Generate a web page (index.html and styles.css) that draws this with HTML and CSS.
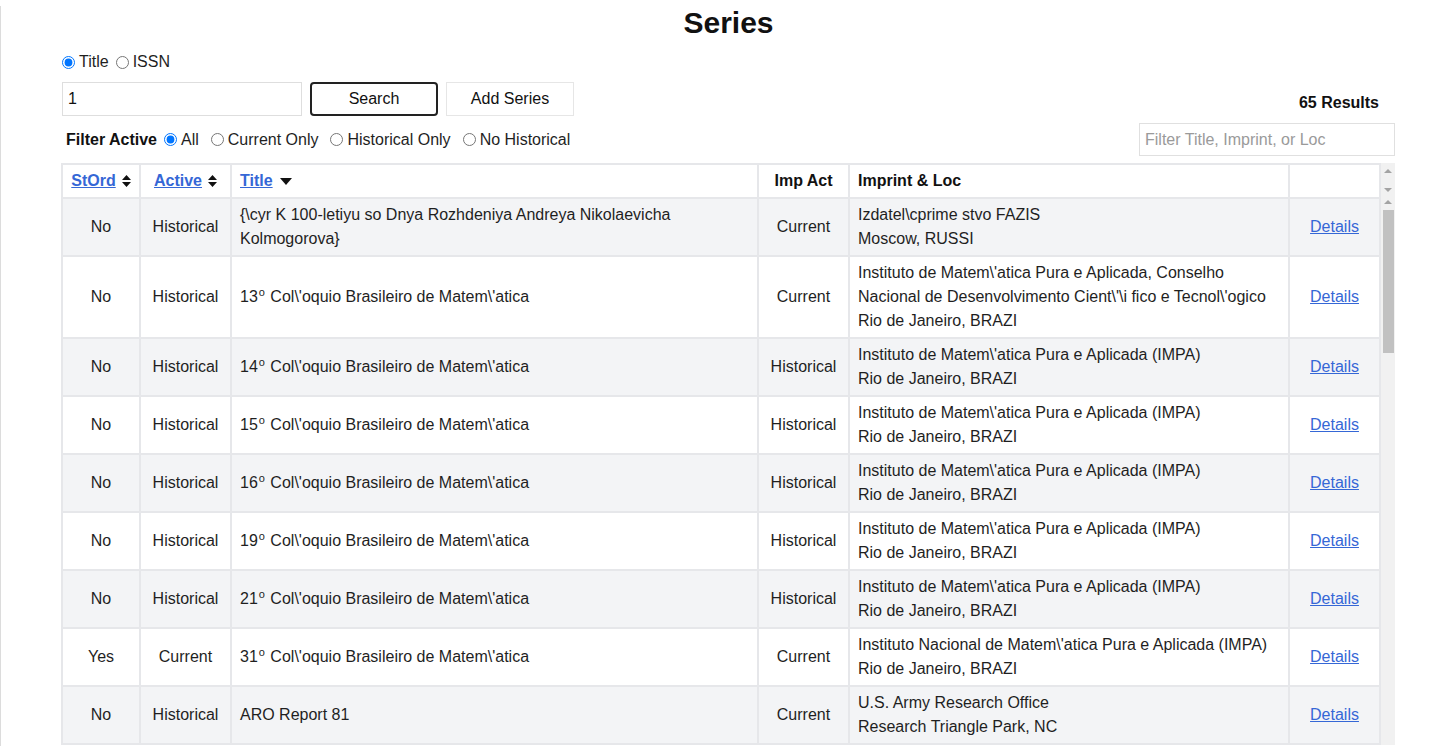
FILE: index.html
```html
<!DOCTYPE html>
<html lang="en">
<head>
<meta charset="utf-8">
<title>Series</title>
<link rel="stylesheet" href="styles.css">
</head>
<body>
<div class="frame">
  <div class="page">
    <h1 class="title">Series</h1>
    <div class="mode-row">
      <label class="opt first"><input type="radio" name="mode" checked>Title</label>
      <label class="opt"><input type="radio" name="mode">ISSN</label>
    </div>
    <div class="search-row">
      <input class="search-input" type="text" value="1">
      <button class="btn btn-search">Search</button>
      <button class="btn btn-add">Add Series</button>
      <div class="results">65 Results</div>
    </div>
    <div class="filter-row">
      <span class="filter-label">Filter Active</span>
      <label class="fopt"><input type="radio" name="fa" checked>All</label>
      <label class="fopt"><input type="radio" name="fa">Current Only</label>
      <label class="fopt"><input type="radio" name="fa">Historical Only</label>
      <label class="fopt"><input type="radio" name="fa">No Historical</label>
      <input class="filter-input" type="text" placeholder="Filter Title, Imprint, or Loc">
    </div>
    <div class="table-wrap">
      <table class="grid">
        <colgroup>
          <col class="c-stord"><col class="c-active"><col class="c-title"><col class="c-imp"><col class="c-loc"><col class="c-det">
        </colgroup>
        <thead>
          <tr>
            <th class="center"><a href="#" class="sort">StOrd</a><svg class="ico-sort" viewBox="0 0 9 12" width="9" height="12"><path d="M4.5 0 L9 5 H0 Z M0 7 H9 L4.5 12 Z" fill="#111"/></svg></th>
            <th class="center"><a href="#" class="sort">Active</a><svg class="ico-sort" viewBox="0 0 9 12" width="9" height="12"><path d="M4.5 0 L9 5 H0 Z M0 7 H9 L4.5 12 Z" fill="#111"/></svg></th>
            <th class="left"><a href="#" class="sort">Title</a><svg class="ico-down" viewBox="0 0 12 7" width="12" height="7"><path d="M0 0 H12 L6 7 Z" fill="#111"/></svg></th>
            <th class="center">Imp Act</th>
            <th class="left">Imprint &amp; Loc</th>
            <th></th>
          </tr>
        </thead>
        <tbody>
          <tr><td class="center">No</td><td class="center">Historical</td><td>{\cyr K 100-letiyu so Dnya Rozhdeniya Andreya Nikolaevicha Kolmogorova}</td><td class="center">Current</td><td>Izdatel\cprime stvo FAZIS<br>Moscow, RUSSI</td><td class="center"><a href="#">Details</a></td></tr>
          <tr><td class="center">No</td><td class="center">Historical</td><td>13<sup>o</sup> Col\'oquio Brasileiro de Matem\'atica</td><td class="center">Current</td><td>Instituto de Matem\'atica Pura e Aplicada, Conselho Nacional de Desenvolvimento Cient\'\i fico e Tecnol\'ogico<br>Rio de Janeiro, BRAZI</td><td class="center"><a href="#">Details</a></td></tr>
          <tr><td class="center">No</td><td class="center">Historical</td><td>14<sup>o</sup> Col\'oquio Brasileiro de Matem\'atica</td><td class="center">Historical</td><td>Instituto de Matem\'atica Pura e Aplicada (IMPA)<br>Rio de Janeiro, BRAZI</td><td class="center"><a href="#">Details</a></td></tr>
          <tr><td class="center">No</td><td class="center">Historical</td><td>15<sup>o</sup> Col\'oquio Brasileiro de Matem\'atica</td><td class="center">Historical</td><td>Instituto de Matem\'atica Pura e Aplicada (IMPA)<br>Rio de Janeiro, BRAZI</td><td class="center"><a href="#">Details</a></td></tr>
          <tr><td class="center">No</td><td class="center">Historical</td><td>16<sup>o</sup> Col\'oquio Brasileiro de Matem\'atica</td><td class="center">Historical</td><td>Instituto de Matem\'atica Pura e Aplicada (IMPA)<br>Rio de Janeiro, BRAZI</td><td class="center"><a href="#">Details</a></td></tr>
          <tr><td class="center">No</td><td class="center">Historical</td><td>19<sup>o</sup> Col\'oquio Brasileiro de Matem\'atica</td><td class="center">Historical</td><td>Instituto de Matem\'atica Pura e Aplicada (IMPA)<br>Rio de Janeiro, BRAZI</td><td class="center"><a href="#">Details</a></td></tr>
          <tr><td class="center">No</td><td class="center">Historical</td><td>21<sup>o</sup> Col\'oquio Brasileiro de Matem\'atica</td><td class="center">Historical</td><td>Instituto de Matem\'atica Pura e Aplicada (IMPA)<br>Rio de Janeiro, BRAZI</td><td class="center"><a href="#">Details</a></td></tr>
          <tr><td class="center">Yes</td><td class="center">Current</td><td>31<sup>o</sup> Col\'oquio Brasileiro de Matem\'atica</td><td class="center">Current</td><td>Instituto Nacional de Matem\'atica Pura e Aplicada (IMPA)<br>Rio de Janeiro, BRAZI</td><td class="center"><a href="#">Details</a></td></tr>
          <tr><td class="center">No</td><td class="center">Historical</td><td>ARO Report 81</td><td class="center">Current</td><td>U.S. Army Research Office<br>Research Triangle Park, NC</td><td class="center"><a href="#">Details</a></td></tr>
        </tbody>
      </table>
      <div class="sbar">
        <div class="sbar-head">
          <span class="arr arr-up"></span>
          <span class="arr arr-down"></span>
        </div>
        <div class="sbar-body">
          <span class="arr arr-up"></span>
          <div class="thumb"></div>
        </div>
      </div>
    </div>
  </div>
</div>
</body>
</html>
```
FILE: styles.css
```css
html, body {
  margin: 0;
  padding: 0;
  overflow: hidden;
  background: #fff;
}
body {
  font-family: "Liberation Sans", Arial, sans-serif;
  font-size: 16px;
  color: #1f1f1f;
}
.frame {
  border-left: 1px solid #dcdcdc;
  min-height: 100vh;
}
.page {
  margin-left: 61px;
  width: 1333px;
}
.title {
  margin: 6px 0 0;
  font-size: 30px;
  line-height: 34px;
  font-weight: bold;
  text-align: center;
  color: #111;
}
.mode-row {
  margin-top: 12px;
  height: 20px;
  display: flex;
  align-items: center;
}
.opt {
  display: flex;
  align-items: center;
  margin-left: 7px;
}
.opt.first { margin-left: 0; }
.opt input, .fopt input {
  width: 13px;
  height: 13px;
  margin: 0 4px 0 0;
}
.search-row {
  margin-top: 10px;
  display: flex;
  align-items: center;
  height: 34px;
}
.search-input {
  box-sizing: border-box;
  width: 240px;
  height: 34px;
  border: 1px solid #dedede;
  padding: 0 5px;
  font: 16px "Liberation Sans", Arial, sans-serif;
  color: #111;
  outline: none;
}
.btn {
  box-sizing: border-box;
  width: 128px;
  height: 34px;
  margin-left: 8px;
  background: #fff;
  font: 16px "Liberation Sans", Arial, sans-serif;
  color: #111;
  padding: 0;
}
.btn-search {
  border: 2px solid #222;
  border-radius: 4px;
}
.btn-add {
  border: 1px solid #e6e6e6;
  border-radius: 0;
}
.results {
  margin-left: auto;
  margin-right: 16px;
  margin-top: 8px;
  font-weight: bold;
  color: #111;
}
.filter-row {
  margin-top: 7px;
  height: 33px;
  display: flex;
  align-items: center;
}
.filter-label {
  font-weight: bold;
  color: #111;
  margin-left: 4px;
  margin-right: 7px;
}
.fopt {
  display: flex;
  align-items: center;
  margin-right: 12px;
}
.filter-input {
  box-sizing: border-box;
  margin-left: auto;
  width: 256px;
  height: 33px;
  border: 1px solid #e0e0e0;
  padding: 0 5px;
  font: 16px "Liberation Sans", Arial, sans-serif;
  outline: none;
}
.filter-input::placeholder { color: #9a9a9a; }
.table-wrap {
  margin-top: 7px;
  margin-left: -1px;
  display: flex;
  align-items: stretch;
}
.grid {
  border-collapse: collapse;
  table-layout: fixed;
  width: 1318px;
}
.c-stord { width: 78px; }
.c-active { width: 91px; }
.c-title { width: 527px; }
.c-imp { width: 91px; }
.c-loc { width: 440px; }
.c-det { width: 91px; }
.grid th, .grid td {
  border: 2px solid #e6e7ea;
  padding: 4px 8px;
  line-height: 24px;
  vertical-align: middle;
  text-align: left;
}
.grid th {
  font-weight: bold;
  color: #111;
  background: #fff;
}
.grid .center { text-align: center; }
.grid tbody tr:nth-child(odd) td { background: #f3f4f6; }
.grid tbody tr:nth-child(even) td { background: #fff; }
.grid a {
  color: #3567d6;
  text-decoration: underline;
}
.ico-sort {
  margin-left: 6px;
  vertical-align: -1px;
}
.ico-down { vertical-align: 1px; margin-left: 7px; }
sup {
  font-size: 11px;
  line-height: 0;
  vertical-align: 6px;
  margin-left: 1px;
  margin-right: 1px;
}
.sbar {
  width: 15px;
  display: flex;
  flex-direction: column;
}
.sbar-head {
  height: 34px;
  background: #f1f1f1;
  display: flex;
  flex-direction: column;
  align-items: center;
  justify-content: space-between;
  padding: 6px 0 5px;
  box-sizing: border-box;
}
.sbar-body {
  flex: 1;
  background: #f1f1f1;
  display: flex;
  flex-direction: column;
  align-items: center;
  padding-top: 3px;
}
.arr {
  width: 0;
  height: 0;
  border-left: 4px solid transparent;
  border-right: 4px solid transparent;
}
.arr-up { border-bottom: 4px solid #a3a3a3; }
.arr-down { border-top: 4px solid #a3a3a3; }
.thumb {
  margin-top: 6px;
  width: 11px;
  height: 143px;
  background: #c1c1c1;
}
```
